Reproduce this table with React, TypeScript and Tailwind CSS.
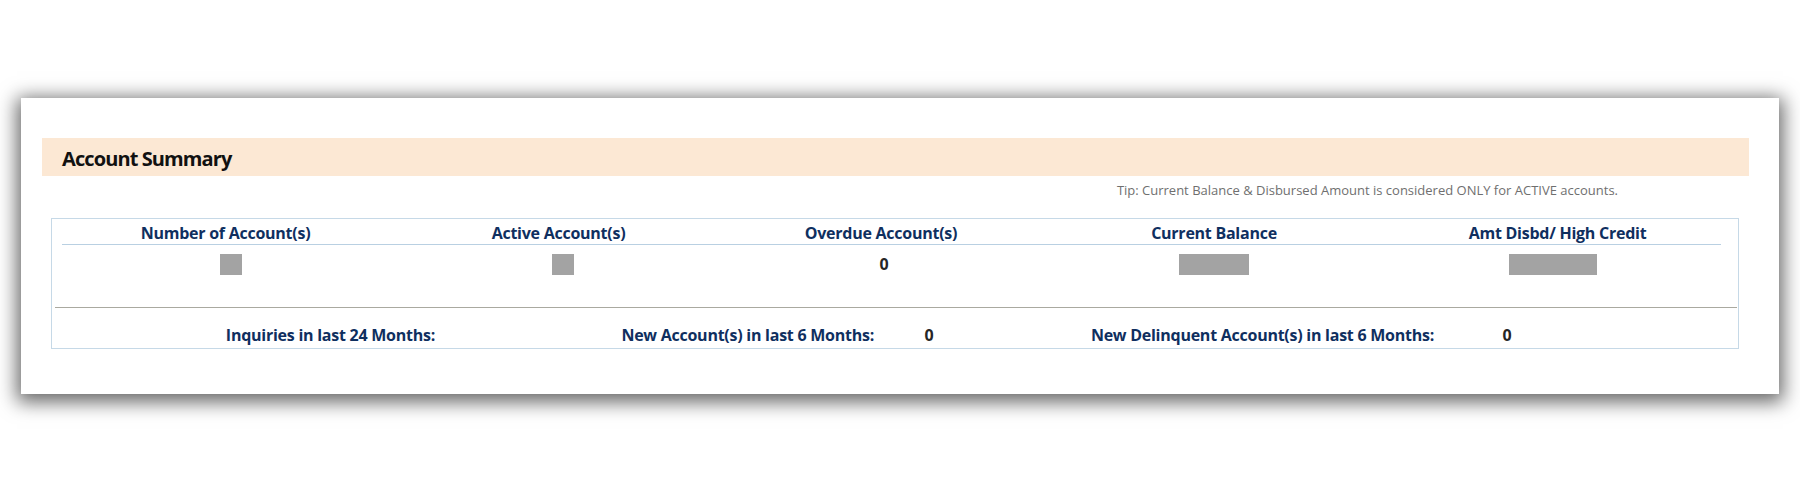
import { FC } from "react";

const headers = [
  "Number of Account(s)",
  "Active Account(s)",
  "Overdue Account(s)",
  "Current Balance",
  "Amt Disbd/ High Credit",
];

// mask = width of the gray block hiding the figure; nudge = small offset seen in the report
const values: Array<{ text?: string; mask?: string; nudge: string }> = [
  { mask: "w-[22px]", nudge: "pl-[11px]" },
  { mask: "w-[22px]", nudge: "pl-[9px]" },
  { text: "0", nudge: "pl-[6px]" },
  { mask: "w-[70px]", nudge: "" },
  { mask: "w-[88px]", nudge: "pr-[10px]" },
];

const Masked: FC<{ width: string }> = ({ width }) => (
  <span className={`block h-[21px] bg-[#a3a3a3] ${width}`} />
);

const App: FC = () => {
  return (
    <div className="min-h-[493px] bg-white pt-[98px] pl-[21px] font-['Open_Sans',sans-serif]">
      <div className="w-[1758px] h-[296px] bg-white pt-10 shadow-[0_4px_18px_4px_rgba(0,0,0,0.6)]">
        {/* section title */}
        <div className="ml-[21px] w-[1707px] h-[38px] bg-[#fce8d4] flex items-center pl-5 pt-1">
          <h2 className="text-[20px] font-bold text-[#111] tracking-[-0.9px]">
            Account Summary
          </h2>
        </div>

        <p className="mt-[5px] pr-[161px] text-right text-[13px] leading-[18px] text-[#6f6f6f]">
          Tip: Current Balance &amp; Disbursed Amount is considered ONLY for
          ACTIVE accounts.
        </p>

        {/* summary table */}
        <div className="mt-[19px] ml-[30px] w-[1688px] h-[131px] border border-[#c6d9e7]">
          <div className="ml-[10px] mr-[17px] grid grid-cols-[327px_339px_306px_360px_1fr] border-b border-[#b9d0e2] h-[26px]">
            {headers.map((h) => (
              <div
                key={h}
                className="text-center text-[16px] font-bold leading-[28px] text-[#0f2f5f] tracking-[-0.25px]"
              >
                {h}
              </div>
            ))}
          </div>

          <div className="ml-[10px] mr-[17px] grid grid-cols-[327px_339px_306px_360px_1fr] h-[62px] pt-[9px]">
            {values.map((v, i) => (
              <div key={i} className={`flex justify-center ${v.nudge}`}>
                {v.mask ? (
                  <Masked width={v.mask} />
                ) : (
                  <span className="text-[16px] font-bold leading-[21px] text-[#262626]">
                    {v.text}
                  </span>
                )}
              </div>
            ))}
          </div>

          <div className="ml-[3px] mr-[1px] border-t border-[#aaa9a0]" />

          <div className="grid grid-cols-[383px_176px_263px_110px_450px_146px_1fr] pt-[17px] text-[16px] font-bold leading-[20px] tracking-[-0.25px]">
            <div className="text-right text-[#0f2f5f]">
              Inquiries in last 24 Months:
            </div>
            <div />
            <div className="text-right text-[#0f2f5f]">
              New Account(s) in last 6 Months:
            </div>
            <div className="text-center text-[#262626]">0</div>
            <div className="text-right text-[#0f2f5f]">
              New Delinquent Account(s) in last 6 Months:
            </div>
            <div className="text-center text-[#262626]">0</div>
            <div />
          </div>
        </div>
      </div>
    </div>
  );
};

export default App;
